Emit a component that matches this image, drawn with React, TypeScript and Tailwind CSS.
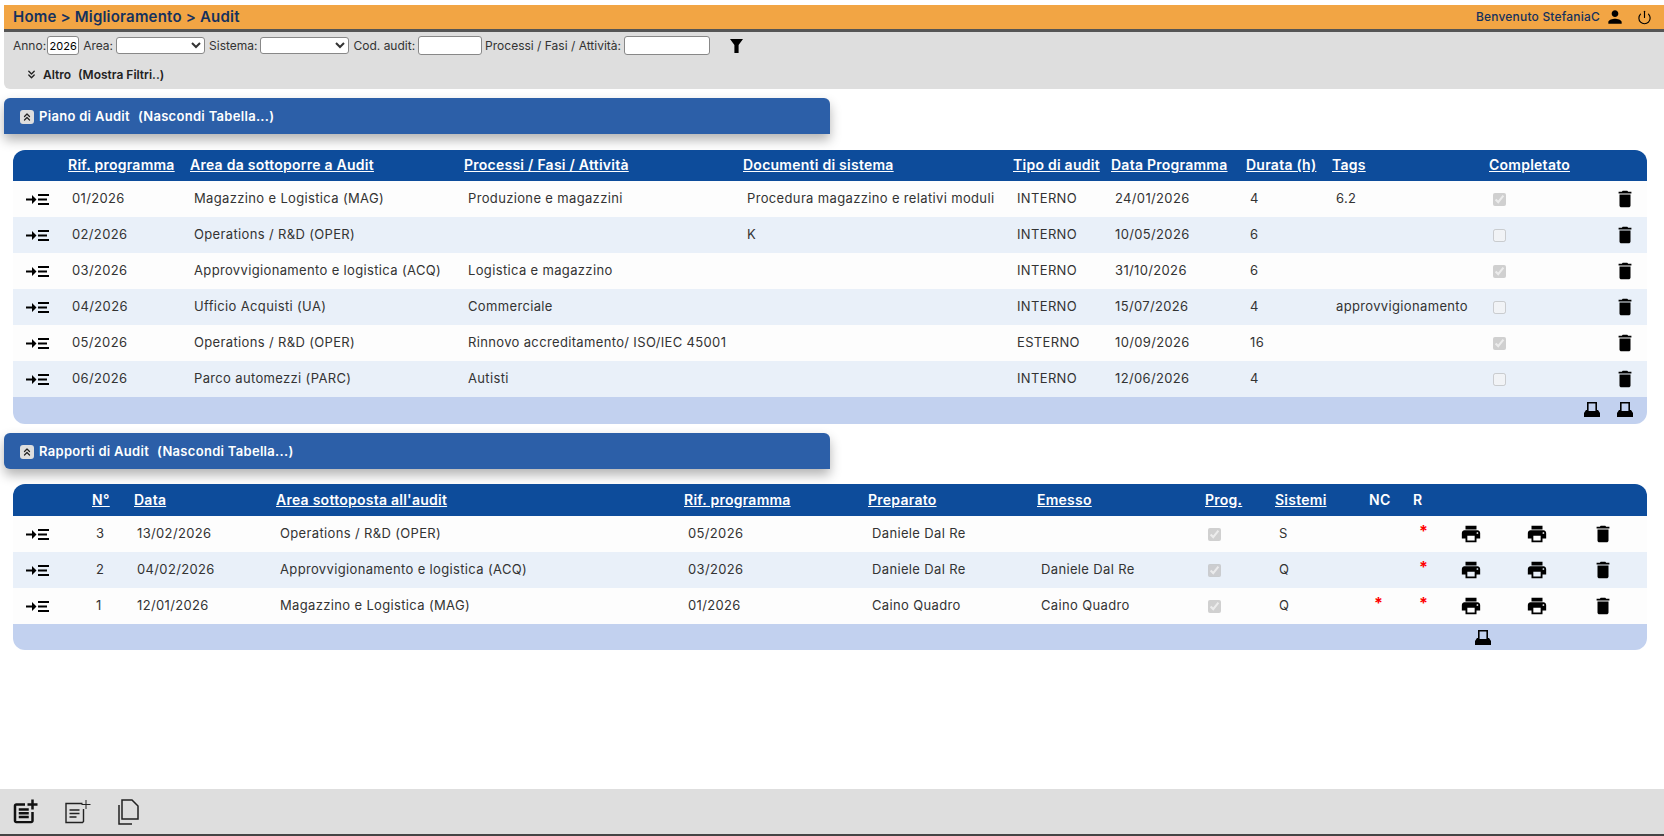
import { ChevronsDown, ChevronsUp, Power } from "lucide-react";
import { MdDelete, MdPerson, MdPostAdd, MdPrint } from "react-icons/md";
import type { ReactNode } from "react";

function Indent() {
  return (
    <svg width="23" height="11" viewBox="0 0 23 11" className="block">
      <path d="M0 4.4h6V1L10.5 5.5 6 10V6.6H0z" fill="#000" />
      <path d="M12 0h11v2H12zM12 4.5h9v2h-9zM12 9h11v2H12z" fill="#000" />
    </svg>
  );
}

function Fax() {
  return (
    <svg width="16" height="15" viewBox="0 0 16 15" className="block shrink-0">
      <path d="M3 0h10v8h1l2 3v4H0v-4l2-3h1zM4.6 1.6V9h6.8V1.6z" fill="#000" fillRule="evenodd" />
    </svg>
  );
}

function Filter() {
  return (
    <svg width="13" height="14" viewBox="0 0 13 14" className="block">
      <path d="M0 0h13L8.6 6v8H4.4V6z" fill="#000" />
    </svg>
  );
}

function Star() {
  return <span className="block text-[#ff0000] text-[16px] leading-none font-bold -mt-[7px]">*</span>;
}

function Check({ on }: { on: boolean }) {
  return <input type="checkbox" checked={on} disabled readOnly className="block w-[13px] h-[13px] m-0" />;
}

function Bar({ title, corner }: { title: string; corner: string }) {
  return (
    <div className={`mt-[9px] ml-1 w-[826px] h-9 bg-[#2c5fa8] rounded-t-md ${corner} shadow-[0_6px_12px_rgba(0,0,0,0.3)] flex items-center pl-[16px] pt-[2px] text-white text-[13px] tracking-[0.3px] font-semibold`}>
      <span className="w-[14px] h-[14px] rounded-[3px] bg-[#dedede] text-[#222] flex items-center justify-center mr-[5px]">
        <ChevronsUp size={12} strokeWidth={2.5} />
      </span>
      <span>{title}</span>
      <span className="ml-[8px]">(Nascondi Tabella...)</span>
    </div>
  );
}

const plan = [
  ["01/2026", "Magazzino e Logistica (MAG)", "Produzione e magazzini", "Procedura magazzino e relativi moduli", "INTERNO", "24/01/2026", "4", "6.2", true],
  ["02/2026", "Operations / R&D (OPER)", "", "K", "INTERNO", "10/05/2026", "6", "", false],
  ["03/2026", "Approvvigionamento e logistica (ACQ)", "Logistica e magazzino", "", "INTERNO", "31/10/2026", "6", "", true],
  ["04/2026", "Ufficio Acquisti (UA)", "Commerciale", "", "INTERNO", "15/07/2026", "4", "approvvigionamento", false],
  ["05/2026", "Operations / R&D (OPER)", "Rinnovo accreditamento/ ISO/IEC 45001", "", "ESTERNO", "10/09/2026", "16", "", true],
  ["06/2026", "Parco automezzi (PARC)", "Autisti", "", "INTERNO", "12/06/2026", "4", "", false],
] as const;

const reports = [
  ["3", "13/02/2026", "Operations / R&D (OPER)", "05/2026", "Daniele Dal Re", "", "S", false],
  ["2", "04/02/2026", "Approvvigionamento e logistica (ACQ)", "03/2026", "Daniele Dal Re", "Daniele Dal Re", "Q", false],
  ["1", "12/01/2026", "Magazzino e Logistica (MAG)", "01/2026", "Caino Quadro", "Caino Quadro", "Q", true],
] as const;

const planHead = ["Rif. programma", "Area da sottoporre a Audit", "Processi / Fasi / Attività", "Documenti di sistema", "Tipo di audit", "Data Programma", "Durata (h)", "Tags", "Completato"];
const planCols = [55, 122, 274, 279, 270, 98, 135, 86, 157, 100, 58];
const repCols = [60, 61, 142, 408, 184, 169, 168, 70, 94, 44, 44, 66, 66, 58];

function Th({ children, link = true }: { children?: ReactNode; link?: boolean }) {
  return <th className={`p-0 pb-[2px] text-left font-semibold text-[14px] tracking-[0.25px] whitespace-nowrap ${link ? "underline" : ""}`}>{children}</th>;
}

export default function App() {
  return (
    <div className="w-[1664px] h-[836px] bg-white flex flex-col pt-[5px] font-['Inter','Open_Sans',sans-serif] text-[#333] overflow-hidden">
      <div className="ml-1 h-6 bg-[#f2a544] flex items-center justify-between pl-[9px] pr-[12px] text-[#14315e]">
        <span className="text-[15px] tracking-[0.2px] font-semibold">Home &gt; Miglioramento &gt; Audit</span>
        <div className="flex items-center text-[12px] tracking-[0.2px] font-medium">
          <span>Benvenuto StefaniaC</span>
          <MdPerson size={20} className="text-black ml-[5px]" />
          <Power size={15} strokeWidth={1.8} className="text-black ml-[12px]" />
        </div>
      </div>
      <div className="ml-1 h-[60px] bg-[#dedede] border-t-[3px] border-[#555] rounded-bl-md text-[12px] text-[#333]">
        <div className="flex items-center h-[27px] pl-[9px]">
          <span>Anno:</span>
          <input readOnly value="2026" className="ml-px w-8 h-[19px] bg-white border border-[#888] rounded-[3px] text-center text-[11px] text-black" />
          <span className="ml-1">Area:</span>
          <select className="ml-[3px] w-[89px] h-[17px] bg-white border border-[#888] rounded-[3px]" />
          <span className="ml-1">Sistema:</span>
          <select className="ml-[3px] w-[89px] h-[17px] bg-white border border-[#888] rounded-[3px]" />
          <span className="ml-1">Cod. audit:</span>
          <input readOnly className="ml-[3px] w-16 h-[19px] bg-white border border-[#888] rounded-[3px]" />
          <span className="ml-[3px]">Processi / Fasi / Attività:</span>
          <input readOnly className="ml-[3px] w-[86px] h-[19px] bg-white border border-[#888] rounded-[3px]" />
          <span className="ml-5"><Filter /></span>
        </div>
        <div className="flex items-center h-[28px] pt-[3px] pl-[21px] text-[12px] font-semibold text-[#222]">
          <ChevronsDown size={13} strokeWidth={2.5} />
          <span className="ml-[5px]">Altro</span>
          <span className="ml-[7px]">(Mostra Filtri..)</span>
        </div>
      </div>

      <Bar title="Piano di Audit" corner="" />

      <div className="mt-4 ml-[13px] w-[1634px]">
        <table className="w-full table-fixed border-separate border-spacing-0 text-[13px] tracking-[0.35px]">
          <colgroup>
            {planCols.map((w, i) => <col key={i} style={{ width: w }} />)}
          </colgroup>
          <thead>
            <tr className="h-[31px] bg-[#0d4c9b] text-white">
              <th className="p-0 rounded-tl-xl" />
              {planHead.map((h) => <Th key={h}>{h}</Th>)}
              <th className="p-0 rounded-tr-xl" />
            </tr>
          </thead>
          <tbody>
            {plan.map((r, i) => (
              <tr key={r[0]} className={`h-9 ${i % 2 ? "bg-[#e9f0f9]" : "bg-[#fdfdfd]"}`}>
                <td className="p-0 pl-[13px]"><Indent /></td>
                {r.slice(0, 8).map((c, j) => <td key={j} className="p-0 pl-1 whitespace-nowrap">{c as string}</td>)}
                <td className="p-0 pl-1"><Check on={r[8]} /></td>
                <td className="p-0 pl-[25px]"><MdDelete size={22} className="text-black" /></td>
              </tr>
            ))}
            <tr className="h-[27px] bg-[#c2d1ef]">
              <td colSpan={10} className="p-0 rounded-bl-xl" />
              <td className="p-0 rounded-br-xl">
                <div className="flex gap-[17px] justify-end pr-[14px] pb-[3px]"><Fax /><Fax /></div>
              </td>
            </tr>
          </tbody>
        </table>
      </div>

      <Bar title="Rapporti di Audit" corner="rounded-bl-md" />

      <div className="mt-[15px] ml-[13px] w-[1634px]">
        <table className="w-full table-fixed border-separate border-spacing-0 text-[13px] tracking-[0.35px]">
          <colgroup>
            {repCols.map((w, i) => <col key={i} style={{ width: w }} />)}
          </colgroup>
          <thead>
            <tr className="h-8 bg-[#0d4c9b] text-white">
              <th className="p-0 rounded-tl-xl" />
              <th className="p-0 pb-[2px] pl-[19px] text-left font-semibold text-[14px] underline">N°</th>
              <Th>Data</Th>
              <Th>Area sottoposta all'audit</Th>
              <Th>Rif. programma</Th>
              <Th>Preparato</Th>
              <Th>Emesso</Th>
              <Th>Prog.</Th>
              <Th>Sistemi</Th>
              <Th link={false}>NC</Th>
              <Th link={false}>R</Th>
              <th className="p-0" />
              <th className="p-0" />
              <th className="p-0 rounded-tr-xl" />
            </tr>
          </thead>
          <tbody>
            {reports.map((r, i) => (
              <tr key={r[0]} className={`h-9 ${i % 2 ? "bg-[#e9f0f9]" : "bg-[#fdfdfd]"}`}>
                <td className="p-0 pl-[13px]"><Indent /></td>
                <td className="p-0 pl-[23px]">{r[0]}</td>
                <td className="p-0 pl-[3px] whitespace-nowrap">{r[1]}</td>
                <td className="p-0 pl-1 whitespace-nowrap">{r[2]}</td>
                <td className="p-0 pl-1">{r[3]}</td>
                <td className="p-0 pl-1">{r[4]}</td>
                <td className="p-0 pl-1">{r[5]}</td>
                <td className="p-0 pl-[3px]"><Check on /></td>
                <td className="p-0 pl-1">{r[6]}</td>
                <td className="p-0 pl-[5px]">{r[7] && <Star />}</td>
                <td className="p-0 pl-[6px]"><Star /></td>
                <td className="p-0 pl-[3px]"><MdPrint size={22} className="text-black" /></td>
                <td className="p-0 pl-[3px]"><MdPrint size={22} className="text-black" /></td>
                <td className="p-0 pl-[3px]"><MdDelete size={22} className="text-black" /></td>
              </tr>
            ))}
            <tr className="h-[26px] bg-[#c2d1ef]">
              <td colSpan={11} className="p-0 rounded-bl-xl" />
              <td className="p-0 pl-[18px]"><Fax /></td>
              <td className="p-0" />
              <td className="p-0 rounded-br-xl" />
            </tr>
          </tbody>
        </table>
      </div>

      <div className="mt-auto h-[47px] bg-[#dedede] border-b-2 border-[#444] flex items-center pl-[10px] text-[#111]">
        <MdPostAdd size={30} />
        <svg width="26" height="24" viewBox="0 0 26 24" className="ml-[25px]" fill="none" stroke="#222" strokeWidth="1.4">
          <path d="M17.5 3.5H1v19h16.5l1-1V9" />
          <path d="M4.5 10h10M4.5 13.5h10M4.5 17h7" strokeWidth="1.7" />
          <path d="M21 0v9M16.5 4.5h9" strokeWidth="1" />
        </svg>
        <svg width="21" height="26" viewBox="0 0 21 26" className="ml-[27px]" fill="none" stroke="#222" strokeWidth="1.5">
          <path d="M4 1h10l6 6v13H4z" />
          <path d="M1 6v19h13" />
        </svg>
      </div>
    </div>
  );
}
